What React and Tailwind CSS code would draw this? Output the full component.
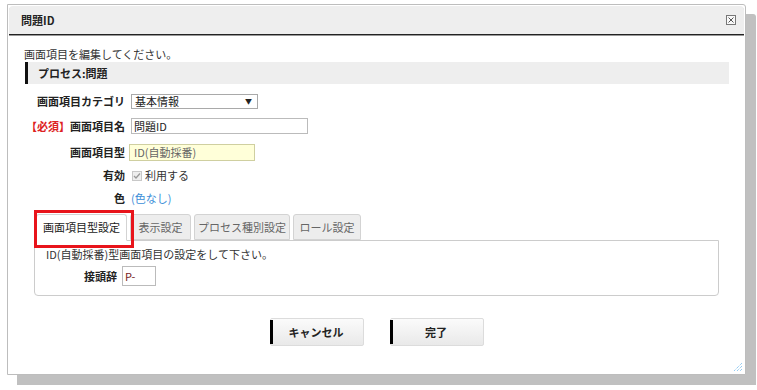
import React from "react";

const font = { fontFamily: '"Noto Sans CJK JP", "Noto Sans", sans-serif' };

function Label({ children }) {
  return (
    <div className="w-[107px] shrink-0 flex justify-end whitespace-nowrap font-bold text-[11px] text-[#222] pr-[6px]">
      <span className="whitespace-nowrap">{children}</span>
    </div>
  );
}

function Tab({ children, active, w }) {
  return (
    <div
      className={
        "h-[26px] flex items-center justify-center text-[11px] rounded-t-[3px] border border-[#d3d3d3] " +
        (active
          ? "bg-white border-b-white text-[#222] relative z-10 -mb-[1px] h-[27px]"
          : "bg-[#ededed] text-[#666]")
      }
      style={{ width: w }}
    >
      {children}
    </div>
  );
}

function Btn({ children }) {
  return (
    <div className="w-[94px] h-[28px] flex items-center border border-[#dcdcdc] bg-gradient-to-b from-[#fbfbfb] to-[#e9e9e9] rounded-[2px]">
      <div className="w-[3px] h-[24px] bg-black ml-[-1px]" />
      <div className="flex-1 text-center font-bold text-[11px] text-[#222] pr-[3px]">{children}</div>
    </div>
  );
}

export default function App() {
  return (
    <div className="w-[757px] h-[390px] bg-white pt-[4px] pl-[7px]" style={font}>
      <div className="relative w-[739px] h-[371px] border border-[#bdbdbd] bg-white shadow-[10px_10px_0_#c0c0c0] p-[1px] rounded-tr-[3px]">
        {/* title bar */}
        <div className="h-[29px] bg-[#eeeeee] rounded-t-[4px] border-b-[1px] border-[#222] shadow-[0_1px_0_#999] flex items-center justify-between pl-[12px] pr-[8px]">
          <div className="font-bold text-[11px] text-[#222] pt-[1px]">問題ID</div>
          <div className="w-[10px] h-[10px] border border-[#777] bg-[#f8f8f8] flex items-center justify-center">
            <svg width="8" height="8" viewBox="0 0 8 8">
              <path d="M1.5 1.5 L6.5 6.5 M6.5 1.5 L1.5 6.5" stroke="#555" strokeWidth="1" />
            </svg>
          </div>
        </div>

        {/* body */}
        <div className="px-[15px]">
          <div className="mt-[12px] text-[11px] text-[#333] leading-[14px]">画面項目を編集してください。</div>
          <div className="mt-[1px] ml-[1px] h-[22px] bg-[#eeeeee] border-l-[3px] border-[#111] flex items-center pl-[10px] font-bold text-[11px] text-[#222]">
            プロセス:問題
          </div>

          <div className="flex items-center h-[24px] mt-[5px]">
            <Label>画面項目カテゴリ</Label>
            <div className="w-[127px] h-[15px] border border-[#a9a9a9] bg-white flex items-center justify-between pl-[3px] pr-[5px] text-[11px] text-[#222]">
              <span>基本情報</span>
              <span className="text-[7px]">▼</span>
            </div>
          </div>

          <div className="flex items-center h-[26px]">
            <Label>
              <span className="text-[#d22]">【必須】</span>画面項目名
            </Label>
            <div className="w-[177px] h-[16px] border border-[#bbbbbb] bg-white flex items-center pl-[2px] text-[11px] text-[#222]">
              問題ID
            </div>
          </div>

          <div className="flex items-center h-[26px]">
            <Label>画面項目型</Label>
            <div className="-ml-[2px] w-[126px] h-[17px] border border-[#cfcfa0] bg-[#ffffd9] flex items-center pl-[4px] text-[11px] text-[#666]">
              ID(自動採番)
            </div>
          </div>

          <div className="flex items-center h-[21px]">
            <Label>有効</Label>
            <div className="flex items-center text-[11px] text-[#333]">
              <div className="w-[10px] h-[10px] border border-[#c8c8c8] bg-[#eeeeee] flex items-center justify-center mr-[3px] ml-[1px]">
                <svg width="8" height="8" viewBox="0 0 8 8">
                  <path d="M1 4 L3 6 L7 1.5" stroke="#999" strokeWidth="1.3" fill="none" />
                </svg>
              </div>
              利用する
            </div>
          </div>

          <div className="flex items-center h-[25px]">
            <Label>色</Label>
            <div className="text-[11px] text-[#3b8ed8]">(色なし)</div>
          </div>

          {/* tabs */}
          <div className="mt-[3px] mx-[10px] relative">
            <div className="flex gap-[3px] pl-[2px]">
              <Tab active w={91}>画面項目型設定</Tab>
              <Tab w={61}>表示設定</Tab>
              <Tab w={96}>プロセス種別設定</Tab>
              <Tab w={68}>ロール設定</Tab>
            </div>
            <div className="h-[56px] border border-[#cccccc] rounded-b-[4px] bg-white px-[11px] pt-[6px]">
              <div className="text-[11px] text-[#333] leading-[14px]">ID(自動採番)型画面項目の設定をして下さい。</div>
              <div className="flex items-center mt-[5px]">
                <div className="w-[76px] text-right pr-[5px] font-bold text-[11px] text-[#222]">接頭辞</div>
                <div className="w-[34px] h-[20px] border border-[#bbbbbb] bg-white flex items-center pl-[2px] text-[11px] text-[#722]">
                  P-
                </div>
              </div>
            </div>
            {/* red annotation box */}
            <div className="absolute left-0 top-[-4px] w-[100px] h-[38px] border-[3px] border-[#e8141b] z-20 pointer-events-none" />
          </div>

          {/* buttons */}
          <div className="flex justify-center gap-[26px] mt-[22px]">
            <Btn>キャンセル</Btn>
            <Btn>完了</Btn>
          </div>
        </div>

        {/* resize handle */}
        <div className="absolute right-[2px] bottom-[2px]">
          <svg width="10" height="10" viewBox="0 0 10 10">
            <path d="M9 1 L1 9 M9 4 L4 9 M9 7 L7 9" stroke="#6ab8ee" strokeWidth="1" strokeDasharray="1 1" />
          </svg>
        </div>
      </div>
    </div>
  );
}
